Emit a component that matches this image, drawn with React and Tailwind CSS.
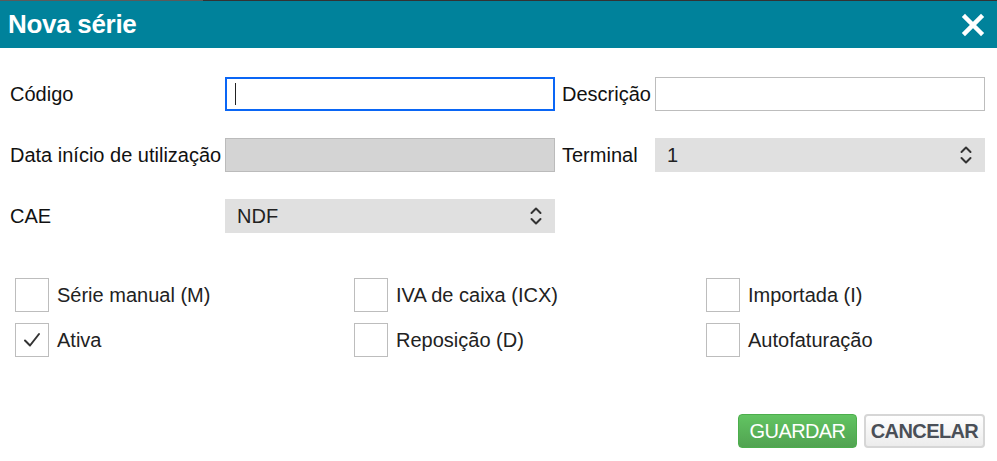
import React from "react";

const font = { fontFamily: '"Liberation Sans", Arial, sans-serif' };

function Chevrons() {
  return (
    <svg width="14" height="22" viewBox="0 0 14 22" fill="none" stroke="#333" strokeWidth="2" strokeLinecap="round" strokeLinejoin="round">
      <path d="M2.5 8 L7 3.5 L11.5 8" />
      <path d="M2.5 14 L7 18.5 L11.5 14" />
    </svg>
  );
}

function Select({ value, className = "" }) {
  return (
    <div className={`h-[34px] bg-[#e0e0e0] flex items-center justify-between pl-3 pr-3 text-[20px] text-[#222] ${className}`}>
      <span>{value}</span>
      <Chevrons />
    </div>
  );
}

function Check({ label, checked }) {
  return (
    <div className="flex items-center gap-2 h-[34px]">
      <div className="w-[34px] h-[34px] border border-[#bdbdbd] bg-white flex items-center justify-center">
        {checked && (
          <svg width="20" height="20" viewBox="0 0 20 20" fill="none" stroke="#333" strokeWidth="2" strokeLinecap="round" strokeLinejoin="round">
            <path d="M3 10.5 L8 15.5 L17 4" />
          </svg>
        )}
      </div>
      <span className="text-[20px] text-[#222]">{label}</span>
    </div>
  );
}

export default function App() {
  return (
    <div className="w-[997px] h-[461px] bg-white relative overflow-hidden" style={font}>
      <div className="flex h-px">
        <div className="w-[203px] bg-[#5a5a5a]" />
        <div className="flex-1 bg-[#333]" />
      </div>
      <div className="h-[47px] bg-[#00829b] flex items-center justify-between pl-2 pr-[12px]">
        <span className="text-white text-[26px] font-bold tracking-[-0.3px]">Nova série</span>
        <svg width="24" height="24" viewBox="0 0 24 24" fill="none" stroke="white" strokeWidth="4.5" strokeLinecap="square">
          <path d="M4 4 L20 20 M20 4 L4 20" />
        </svg>
      </div>

      <div className="pl-[10px] pt-[29px] flex flex-col gap-[27px]">
        <div className="flex items-center">
          <span className="w-[215px] text-[20px] text-[#111]">Código</span>
          <div className="w-[330px] h-[34px] border-2 border-[#0a66f5] flex items-center pl-[8px]">
            <div className="w-px h-[22px] bg-[#222]" />
          </div>
          <span className="ml-[7px] w-[93px] text-[20px] text-[#111]">Descrição</span>
          <div className="w-[330px] h-[34px] border border-[#bdbdbd]" />
        </div>
        <div className="flex items-center">
          <span className="w-[215px] text-[20px] text-[#111] whitespace-nowrap">Data início de utilização</span>
          <div className="w-[330px] h-[34px] border border-[#bbbbbb] bg-[#d4d4d4]" />
          <span className="ml-[7px] w-[93px] text-[20px] text-[#111]">Terminal</span>
          <Select value="1" className="w-[330px]" />
        </div>
        <div className="flex items-center">
          <span className="w-[215px] text-[20px] text-[#111]">CAE</span>
          <Select value="NDF" className="w-[330px]" />
        </div>
      </div>

      <div className="pl-[15px] mt-[45px] grid grid-cols-[339px_352px_1fr] gap-y-[11px]">
        <Check label="Série manual (M)" />
        <Check label="IVA de caixa (ICX)" />
        <Check label="Importada (I)" />
        <Check label="Ativa" checked />
        <Check label="Reposição (D)" />
        <Check label="Autofaturação" />
      </div>

      <div className="flex justify-end gap-[7px] pr-[12px] mt-[57px]">
        <button className="h-[34px] w-[119px] rounded-[4px] border border-[#4cae4c] bg-gradient-to-b from-[#62c462] to-[#51a351] text-white text-[20px] tracking-[-0.6px]">GUARDAR</button>
        <button className="h-[34px] w-[121px] rounded-[4px] border-2 border-[#d6d6d6] bg-gradient-to-b from-white to-[#ececec] text-[#4a4f57] text-[20px] tracking-[-0.6px] font-bold">CANCELAR</button>
      </div>
    </div>
  );
}
